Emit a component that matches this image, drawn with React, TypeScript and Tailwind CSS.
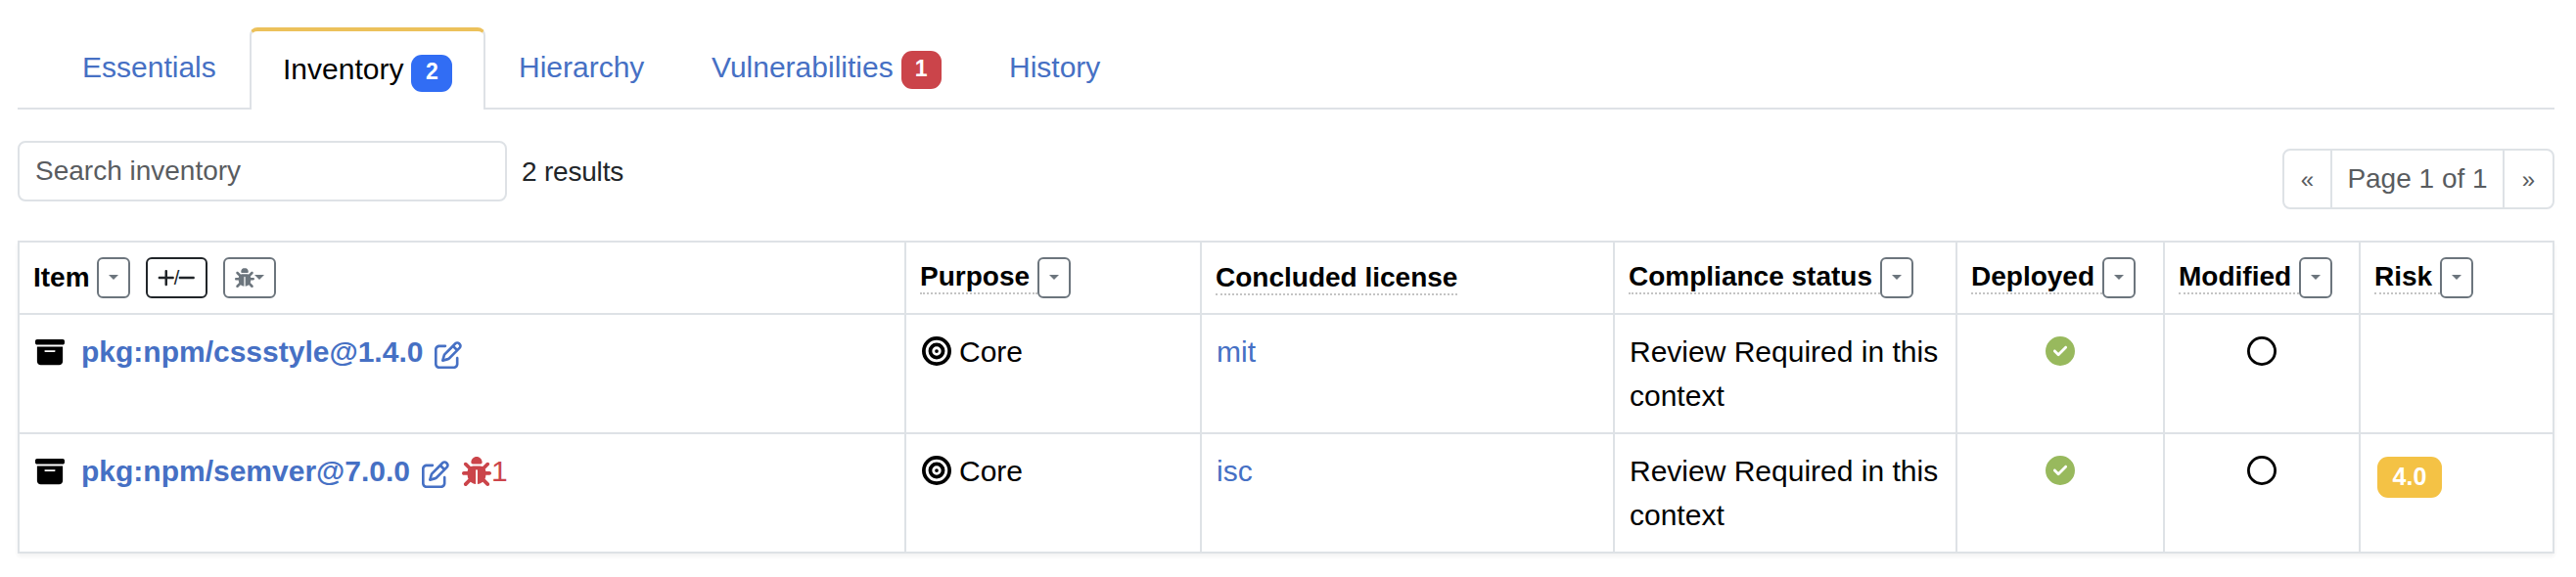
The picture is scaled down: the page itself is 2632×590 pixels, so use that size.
import React from "react";
import {
  FaBoxArchive,
  FaBug,
  FaBullseye,
  FaCircleCheck,
  FaMinus,
  FaPlus,
  FaRegCircle,
  FaRegPenToSquare,
} from "react-icons/fa6";

function Caret() {
  return <span className="mb-[2px] block h-0 w-0 border-x-[5px] border-t-[5px] border-x-transparent border-t-current" />;
}

function FilterButton() {
  return (
    <button className="flex h-[42px] w-[34px] shrink-0 items-center justify-center rounded-[6px] border-2 border-[#6c757d] text-[#6c757d]">
      <Caret />
    </button>
  );
}

const cell = "border-2 border-[#dee2e6] align-top";

function HeaderCell({ label, width, textWidth }: { label: string; width: string; textWidth: string }) {
  return (
    <th className={`${cell} ${width} h-[74px] p-0`}>
      <div className="flex h-[72px] items-center pl-[14px]">
        <span className={`${textWidth} mb-[2px] h-[36px] shrink-0 border-b-2 border-dotted border-[#c4c4c4] pt-[2px] text-left leading-[32px] whitespace-nowrap`}>
          {label}
        </span>
        <FilterButton />
      </div>
    </th>
  );
}

type Item = { name: string; license: string; bugs?: number; risk?: string };

const items: Item[] = [
  { name: "pkg:npm/cssstyle@1.4.0", license: "mit" },
  { name: "pkg:npm/semver@7.0.0", license: "isc", bugs: 1, risk: "4.0" },
];

function ItemRow({ item }: { item: Item }) {
  return (
    <tr className="h-[122px]">
      <td className={`${cell} pt-[15px] pl-[16px]`}>
        <div className="flex h-[45px] items-center">
          <FaBoxArchive className="h-[30px] w-[30px]" />
          <a className="ml-[17px] font-bold text-[#4670c4]">{item.name}</a>
          <FaRegPenToSquare className="mt-[6px] ml-[12px] h-[28px] w-[28px] text-[#4670c4]" />
          {item.bugs && (
            <span className="ml-[13px] flex items-center text-[#cb444a]">
              <FaBug className="h-[30px] w-[30px]" />
              {item.bugs}
            </span>
          )}
        </div>
      </td>
      <td className={`${cell} pt-[15px] pl-[16px]`}>
        <div className="flex h-[45px] items-center">
          <FaBullseye className="mb-[1px] h-[30px] w-[30px]" />
          <span className="ml-[8px]">Core</span>
        </div>
      </td>
      <td className={`${cell} pt-[15px] pl-[15px] text-[#4670c4]`}>{item.license}</td>
      <td className={`${cell} pt-[15px] pl-[15px]`}>
        Review Required in this
        <br />
        context
      </td>
      <td className={`${cell} pt-[22px]`}>
        <FaCircleCheck className="mx-auto h-[30px] w-[30px] text-[#98b95d]" />
      </td>
      <td className={`${cell} pt-[22px]`}>
        <FaRegCircle className="mx-auto h-[30px] w-[30px]" />
      </td>
      <td className={`${cell} pt-[23px] pl-[17px]`}>
        {item.risk && (
          <span className="flex h-[42px] w-[66px] items-center justify-center rounded-[11px] bg-[#f4c245] pb-px text-[25px] font-bold text-white">
            {item.risk}
          </span>
        )}
      </td>
    </tr>
  );
}

export default function App() {
  return (
    <div className="h-[590px] w-[2632px] bg-white pt-[28px] pr-[22px] pl-[18px] font-['Liberation_Sans',Arial,sans-serif] text-[30px] leading-[45px] text-black">
      <nav className="flex h-[84px] border-b-2 border-[#dee2e6] pl-[66px] text-[#4670c4]">
        <a className="w-[171px] pt-[18px]">Essentials</a>
        <a className="flex h-[84px] w-[241px] rounded-t-[8px] border-x-2 border-t-4 border-x-[#dee2e6] border-t-[#ecc15b] bg-white pt-[16px] pl-[32px] text-black">
          Inventory
          <span className="mt-[8px] ml-[8px] flex h-[38px] w-[42px] items-center justify-center rounded-[11px] bg-[#316df4] pb-[3px] text-[23px] font-bold text-white">
            2
          </span>
        </a>
        <a className="w-[197px] pt-[18px] pl-[34px]">Hierarchy</a>
        <a className="flex w-[304px] pt-[18px] pl-[34px]">
          Vulnerabilities
          <span className="mt-[6px] ml-[8px] flex h-[39px] w-[41px] shrink-0 items-center justify-center rounded-[11px] bg-[#cb444a] pb-[3px] text-[23px] font-bold text-white">
            1
          </span>
        </a>
        <a className="pt-[18px] pl-[34px]">History</a>
      </nav>

      <div className="flex h-[134px] items-start pt-[32px]">
        <input
          placeholder="Search inventory"
          className="h-[62px] w-[500px] rounded-[8px] border-2 border-[#dee2e6] px-[16px] text-[28px] placeholder:text-[#595c5f]"
        />
        <span className="pt-[9px] pl-[15px] text-[28px] tracking-[-0.2px] text-[#212529]">2 results</span>
        <div className="mt-[8px] ml-auto flex h-[62px] w-[278px] items-center rounded-[8px] border-2 border-[#dee2e6] text-[#595c5f]">
          <span className="w-[47px] text-center text-[24px]">«</span>
          <span className="h-full flex-1 border-x-2 border-[#dee2e6] text-center text-[28px] leading-[58px]">Page 1 of 1</span>
          <span className="w-[49px] text-center text-[24px]">»</span>
        </div>
      </div>

      <table className="w-[2592px] table-fixed border-collapse shadow-[0_3px_4px_rgba(0,0,0,0.05)]">
        <thead className="text-[28px]">
          <tr className="h-[74px]">
            <th className={`${cell} w-[906px] p-0`}>
              <div className="flex h-[72px] items-center pl-[14px]">
                <span className="w-[65px] pb-px text-left">Item</span>
                <FilterButton />
                <button className="ml-[16px] flex h-[42px] w-[63px] items-center justify-center rounded-[6px] border-2 border-[#212529] text-[20px] leading-none font-normal text-[#212529]">
                  <FaPlus className="h-[20px] w-[17.5px] shrink-0" />
                  <span className="-mx-px">/</span>
                  <FaMinus className="h-[20px] w-[17.5px] shrink-0" />
                </button>
                <button className="ml-[16px] flex h-[42px] w-[54px] items-center justify-center rounded-[6px] border-2 border-[#6c757d] text-[#6c757d]">
                  <FaBug className="h-[20px] w-[20px]" />
                  <Caret />
                </button>
              </div>
            </th>
            <HeaderCell label="Purpose" width="w-[302px]" textWidth="w-[120px]" />
            <th className={`${cell} w-[422px] p-0`}>
              <div className="flex h-[72px] items-center pl-[14px]">
                <span className="h-[36px] border-b-2 border-dotted border-[#c4c4c4] pt-px leading-[33px]">Concluded license</span>
              </div>
            </th>
            <HeaderCell label="Compliance status" width="w-[350px]" textWidth="w-[257px]" />
            <HeaderCell label="Deployed" width="w-[212px]" textWidth="w-[134px]" />
            <HeaderCell label="Modified" width="w-[200px]" textWidth="w-[123px]" />
            <HeaderCell label="Risk" width="w-[198px]" textWidth="w-[67px]" />
          </tr>
        </thead>
        <tbody>
          {items.map((item) => (
            <ItemRow key={item.name} item={item} />
          ))}
        </tbody>
      </table>
    </div>
  );
}
